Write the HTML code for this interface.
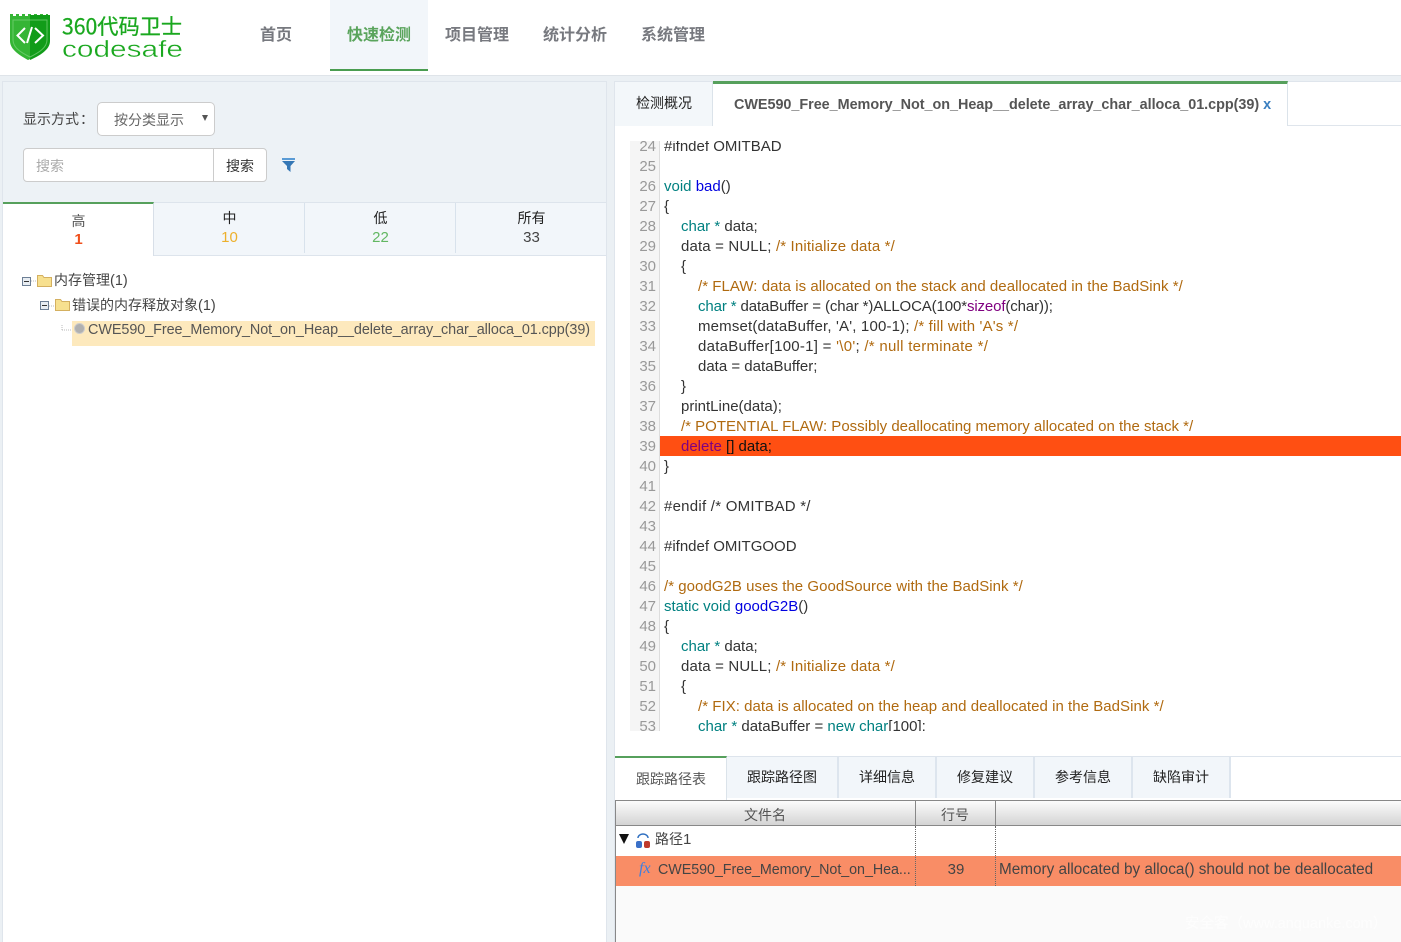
<!DOCTYPE html>
<html lang="zh-CN"><head><meta charset="utf-8"><title>codesafe</title>
<style>
*{box-sizing:border-box}
html,body{margin:0;padding:0}
body{width:1401px;height:942px;overflow:hidden;position:relative;background:#fff;font-family:"Liberation Sans","Noto Sans CJK SC",sans-serif;font-size:14px;color:#444}
.a{position:absolute;white-space:nowrap}
.cn{font-family:"Noto Sans CJK SC","Liberation Sans",sans-serif}
.nav{top:23px;font-size:16px;line-height:20px;font-weight:700;color:#77797f;font-family:"Noto Sans CJK SC",sans-serif}
#code{position:absolute;left:630px;top:141px;width:771px;height:590px;overflow:hidden}
#gut{position:absolute;left:0;top:0;width:30px;height:590px;background:#f5f5f5;border-right:1px solid #ddd}
.l{position:absolute;left:0;width:771px;height:20px;line-height:20px;white-space:pre;font-size:15px;color:#333}
.l b{position:absolute;left:0;top:1px;width:26px;text-align:right;font-weight:400;color:#999;font-size:15px}
.l i{font-style:normal;position:absolute;top:1px}
.t{color:#008080}.f{color:#0000e0}.c{color:#b06a10}.k{color:#800080}
.tab{position:absolute;background:#f2f6fa;border-right:2px solid #dde5ee;text-align:center;font-family:"Noto Sans CJK SC",sans-serif;font-size:14px;color:#222}
</style></head><body>

<!-- header -->
<div class="a" style="left:0;top:75px;width:1401px;height:867px;background:#ebf0f4;border-top:1px solid #dfe4e9"></div>
<svg class="a" style="left:8px;top:12px" width="44" height="49" viewBox="0 0 44 49">
<path d="M2 2h3v2h3V2h3v2h3V2h3v2h3V2h3v2h3V2h3v2h3V2h3v2h3V2h2v27c0 9-11 15-20 19C13 44 2 38 2 29z" fill="#35b535"/>
<path d="M22 3h20v26c0 9-11 15-20 19z" fill="#119c19"/>
<path d="M5 8h34v20c0 8-9 13-17 17C14 41 5 36 5 28z" fill="none" stroke="#7ed47e" stroke-width="1" opacity=".7"/>
<path d="M17 16l-7.500 7.500L17 31M27 16l8 7.500-8 7.500M24 15l-5 16" fill="none" stroke="#fff" stroke-width="2"/>
</svg>
<svg class="a" style="left:60px;top:12px" width="126" height="50">
<text x="2" y="22" font-size="21" fill="#1aa81f" stroke="#1aa81f" stroke-width=".3" textLength="120" lengthAdjust="spacingAndGlyphs" font-family="Noto Sans CJK SC,sans-serif">360代码卫士</text>
<text x="2" y="45" font-size="23" fill="#1aa81f" stroke="#fff" stroke-width=".35" textLength="121" lengthAdjust="spacingAndGlyphs" font-family="Liberation Sans,sans-serif">codesafe</text>
</svg>
<div class="a nav" style="left:260px">首页</div>
<div class="a" style="left:330px;top:0;width:98px;height:71px;background:#f2f6fa;border-bottom:2px solid #4a9d50"></div>
<div class="a nav" style="left:347px;color:#5aa45c">快速检测</div>
<div class="a nav" style="left:445px">项目管理</div>
<div class="a nav" style="left:543px">统计分析</div>
<div class="a nav" style="left:641px">系统管理</div>

<!-- left panel -->
<div class="a" style="left:2px;top:81px;width:605px;height:861px;background:#fff;border:1px solid #dfe5ec;border-bottom:0"></div>
<div class="a" style="left:3px;top:82px;width:603px;height:120px;background:#edf2f6"></div>
<div class="a cn" style="left:23px;top:109px;font-size:14px;line-height:20px;color:#444;letter-spacing:0">显示方式<span style="margin-left:1px">：</span></div>
<div class="a" style="left:97px;top:102px;width:118px;height:34px;background:#fff;border:1px solid #ccc;border-radius:5px"></div>
<div class="a cn" style="left:114px;top:110px;font-size:14px;line-height:20px;color:#666">按分类显示</div>
<div class="a" style="left:202px;top:115px;width:0;height:0;border:3.5px solid transparent;border-top:6px solid #555;border-bottom:0"></div>
<div class="a" style="left:23px;top:148px;width:244px;height:34px;background:#fff;border:1px solid #ccc;border-radius:4px"></div>
<div class="a" style="left:213px;top:149px;width:1px;height:32px;background:#ccc"></div>
<div class="a cn" style="left:36px;top:156px;font-size:14px;line-height:20px;color:#aaa">搜索</div>
<div class="a cn" style="left:226px;top:156px;font-size:14px;line-height:20px;color:#333">搜索</div>
<svg class="a" style="left:282px;top:158px" width="14" height="14"><path d="M0 0h13v2H0z" fill="#5a9bd5"/><path d="M0 3h13L8.500 8v6L5 11V8z" fill="#3577b5"/></svg>

<div class="a" style="left:3px;top:202px;width:603px;height:54px;background:#f2f6fa;border-top:1px solid #dde4ec;border-bottom:1px solid #dde4ec"></div>
<div class="a" style="left:3px;top:202px;width:151px;height:54px;background:#fff;border-top:2px solid #56a05c;border-right:1px solid #d8dfe8"></div>
<div class="a" style="left:304px;top:203px;width:1px;height:50px;background:#d8e2ec"></div>
<div class="a" style="left:455px;top:203px;width:1px;height:50px;background:#d8e2ec"></div>
<div class="a cn" style="left:3px;top:212px;width:151px;text-align:center;font-size:14px;line-height:18px;color:#555">高</div>
<div class="a" style="left:3px;top:231px;width:151px;text-align:center;font-size:15px;line-height:18px;font-weight:700;color:#f0501c">1</div>
<div class="a cn" style="left:154px;top:209px;width:151px;text-align:center;font-size:14px;line-height:18px;color:#222">中</div>
<div class="a" style="left:154px;top:229px;width:151px;text-align:center;font-size:15px;line-height:18px;color:#edb02c">10</div>
<div class="a cn" style="left:305px;top:209px;width:151px;text-align:center;font-size:14px;line-height:18px;color:#222">低</div>
<div class="a" style="left:305px;top:229px;width:151px;text-align:center;font-size:15px;line-height:18px;color:#62b762">22</div>
<div class="a cn" style="left:456px;top:209px;width:151px;text-align:center;font-size:14px;line-height:18px;color:#222">所有</div>
<div class="a" style="left:456px;top:229px;width:151px;text-align:center;font-size:15px;line-height:18px;color:#444">33</div>

<!-- tree -->
<svg class="a" style="left:20px;top:270px" width="70" height="70">
<path d="M11 11h6M29 36h6M42 60v-6M42 60h10" stroke="#bbb" stroke-dasharray="1 1" fill="none"/>
<g fill="#e8edf2" stroke="#6d7f95"><rect x="2.500" y="7.500" width="8" height="8"/><rect x="20.500" y="31.500" width="8" height="8"/></g>
<path d="M4 11.500h5M22 35.500h5" stroke="#333"/>
<g fill="#f7e08f" stroke="#d4b060"><path d="M17.500 5.500h5l1.500 2h7.500v9h-14z"/><path d="M35.500 29.500h5l1.500 2h7.500v9h-14z"/></g>
</svg>
<div class="a" style="left:72px;top:321px;width:523px;height:25px;background:#fde9bd"></div>
<div class="a" style="left:74px;top:323px;width:11px;height:11px;border-radius:50%;background:#b0b0b0;border:1px solid #ccc"></div>
<div class="a" style="left:54px;top:270px;font-size:14.500px;line-height:20px;color:#444"><span class="cn" style="font-size:14px">内存管理</span>(1)</div>
<div class="a" style="left:72px;top:295px;font-size:14.500px;line-height:20px;color:#444"><span class="cn" style="font-size:14px">错误的内存释放对象</span>(1)</div>
<div class="a" id="fn" style="left:88px;top:320px;font-size:14.4px;line-height:20px;letter-spacing:-.065px;color:#555">CWE590_Free_Memory_Not_on_Heap__delete_array_char_alloca_01.cpp(39)</div>

<!-- right panel -->
<div class="a" style="left:614px;top:81px;width:787px;height:861px;background:#fff;border-left:1px solid #dfe5ec;border-top:1px solid #dfe5ec"></div>
<div class="a" style="left:615px;top:125px;width:786px;height:1px;background:#dfe5ec"></div>
<div class="a" style="left:615px;top:82px;width:98px;height:44px;background:#f3f7fa;border-right:1px solid #dbe3ea"></div>
<div class="a cn" style="left:636px;top:94px;font-size:14px;line-height:18px;color:#222">检测概况</div>
<div class="a" style="left:713px;top:81px;width:575px;height:45px;background:#fff;border-top:3px solid #56a05c;border-right:1px solid #dbe3ea"></div>
<div class="a" style="left:734px;top:95px;font-size:14.4px;line-height:20px;font-weight:700;letter-spacing:-.03px;color:#555">CWE590_Free_Memory_Not_on_Heap__delete_array_char_alloca_01.cpp(39) <span style="color:#3a7fc0">x</span></div>

<div id="code">
<div id="gut"></div>
<div class="l" style="top:-5px"><b>24</b><i style="left:34px">#ifndef OMITBAD</i></div>
<div class="l" style="top:15px"><b>25</b></div>
<div class="l" style="top:35px"><b>26</b><i style="left:34px"><span class="t">void</span> <span class="f">bad</span>()</i></div>
<div class="l" style="top:55px"><b>27</b><i style="left:34px">{</i></div>
<div class="l" style="top:75px"><b>28</b><i style="left:51px"><span class="t">char *</span> data;</i></div>
<div class="l" style="top:95px"><b>29</b><i style="left:51px;letter-spacing:.15px">data = NULL; <span class="c">/* Initialize data */</span></i></div>
<div class="l" style="top:115px"><b>30</b><i style="left:51px">{</i></div>
<div class="l" style="top:135px"><b>31</b><i style="left:68px;letter-spacing:.04px" class="c">/* FLAW: data is allocated on the stack and deallocated in the BadSink */</i></div>
<div class="l" style="top:155px"><b>32</b><i style="left:68px;letter-spacing:-.12px"><span class="t">char *</span> dataBuffer = (char *)ALLOCA(100*<span class="k">sizeof</span>(char));</i></div>
<div class="l" style="top:175px"><b>33</b><i style="left:68px;letter-spacing:.17px">memset(dataBuffer, 'A', 100-1); <span class="c">/* fill with 'A's */</span></i></div>
<div class="l" style="top:195px"><b>34</b><i style="left:68px;letter-spacing:.27px">dataBuffer[100-1] = <span class="c">'\0'</span>; <span class="c">/* null terminate */</span></i></div>
<div class="l" style="top:215px"><b>35</b><i style="left:68px">data = dataBuffer;</i></div>
<div class="l" style="top:235px"><b>36</b><i style="left:51px">}</i></div>
<div class="l" style="top:255px"><b>37</b><i style="left:51px">printLine(data);</i></div>
<div class="l" style="top:275px"><b>38</b><i style="left:51px" class="c">/* POTENTIAL FLAW: Possibly deallocating memory allocated on the stack */</i></div>
<div class="l" style="top:295px"><b>39</b><span style="position:absolute;left:30px;top:0;width:741px;height:20px;background:#ff4f12"></span><i style="left:51px;color:#111"><span class="k">delete</span> [] data;</i></div>
<div class="l" style="top:315px"><b>40</b><i style="left:34px">}</i></div>
<div class="l" style="top:335px"><b>41</b></div>
<div class="l" style="top:355px"><b>42</b><i style="left:34px;letter-spacing:.25px">#endif /* OMITBAD */</i></div>
<div class="l" style="top:375px"><b>43</b></div>
<div class="l" style="top:395px"><b>44</b><i style="left:34px">#ifndef OMITGOOD</i></div>
<div class="l" style="top:415px"><b>45</b></div>
<div class="l" style="top:435px"><b>46</b><i style="left:34px;letter-spacing:.04px" class="c">/* goodG2B uses the GoodSource with the BadSink */</i></div>
<div class="l" style="top:455px"><b>47</b><i style="left:34px"><span class="t">static void</span> <span class="f">goodG2B</span>()</i></div>
<div class="l" style="top:475px"><b>48</b><i style="left:34px">{</i></div>
<div class="l" style="top:495px"><b>49</b><i style="left:51px"><span class="t">char *</span> data;</i></div>
<div class="l" style="top:515px"><b>50</b><i style="left:51px;letter-spacing:.15px">data = NULL; <span class="c">/* Initialize data */</span></i></div>
<div class="l" style="top:535px"><b>51</b><i style="left:51px">{</i></div>
<div class="l" style="top:555px"><b>52</b><i style="left:68px;letter-spacing:.04px" class="c">/* FIX: data is allocated on the heap and deallocated in the BadSink */</i></div>
<div class="l" style="top:575px"><b>53</b><i style="left:68px"><span class="t">char *</span> dataBuffer = <span class="t">new char</span>[100];</i></div>
</div>

<!-- bottom tabs -->
<div class="a" style="left:615px;top:756px;width:786px;height:1px;background:#dde4ec"></div>
<div class="a" style="left:615px;top:756px;width:112px;height:44px;background:#fff;border-top:2px solid #56a05c;border-right:1px solid #dbe3ea"></div>
<div class="a cn" style="left:636px;top:770px;font-size:14px;line-height:18px;color:#555">跟踪路径表</div>
<div class="tab" style="left:727px;top:757px;width:112px;height:41px;line-height:40px">跟踪路径图</div>
<div class="tab" style="left:839px;top:757px;width:98px;height:41px;line-height:40px">详细信息</div>
<div class="tab" style="left:937px;top:757px;width:98px;height:41px;line-height:40px">修复建议</div>
<div class="tab" style="left:1035px;top:757px;width:98px;height:41px;line-height:40px">参考信息</div>
<div class="tab" style="left:1133px;top:757px;width:98px;height:41px;line-height:40px">缺陷审计</div>

<!-- table -->
<div class="a" style="left:615px;top:800px;width:786px;height:142px;background:#fafafa;border-left:1px solid #888"></div>
<div class="a" style="left:616px;top:826px;width:785px;height:30px;background:#fff"></div>
<div class="a" style="left:615px;top:800px;width:786px;height:26px;background:linear-gradient(#fcfcfc,#d4d4d4);border-top:1px solid #888;border-bottom:1px solid #888;border-left:1px solid #888"></div>
<div class="a" style="left:915px;top:801px;width:1px;height:24px;background:#888"></div>
<div class="a" style="left:995px;top:801px;width:1px;height:24px;background:#888"></div>
<div class="a cn" style="left:615px;top:806px;width:300px;text-align:center;font-size:14px;line-height:18px;color:#555">文件名</div>
<div class="a cn" style="left:915px;top:806px;width:80px;text-align:center;font-size:14px;line-height:18px;color:#555">行号</div>
<div class="a" style="left:616px;top:856px;width:785px;height:30px;background:#f98d66"></div>
<div class="a" style="left:915px;top:826px;width:0;height:60px;border-left:1px dotted #666"></div>
<div class="a" style="left:995px;top:826px;width:0;height:60px;border-left:1px dotted #666"></div>
<div class="a" style="left:619px;top:834px;width:0;height:0;border:5.500px solid transparent;border-top:10px solid #111;border-bottom:0"></div>
<svg class="a" style="left:635px;top:833px" width="16" height="16"><path d="M3 5a5 4 0 0 1 10 0" fill="none" stroke="#2f6fc0" stroke-width="1.500"/><rect x="1" y="8" width="6" height="7" rx="2" fill="#3a70c8"/><rect x="9" y="8" width="6" height="7" rx="2" fill="#c03a2c"/></svg>
<div class="a" style="left:655px;top:830px;font-size:15px;line-height:18px;color:#444"><span class="cn" style="font-size:14px">路径</span>1</div>
<div class="a" style="left:639px;top:860px;font-family:'Liberation Serif',serif;font-style:italic;font-size:16px;line-height:18px;color:#3f7fe0">fx</div>
<div class="a" style="left:658px;top:861px;font-size:14.3px;line-height:18px;letter-spacing:-.05px;color:#444;width:256px;overflow:hidden">CWE590_Free_Memory_Not_on_Hea...</div>
<div class="a" style="left:916px;top:861px;width:80px;text-align:center;font-size:15px;line-height:18px;color:#444">39</div>
<div class="a" style="left:999px;top:861px;font-size:15.3px;line-height:18px;color:#444">Memory allocated by alloca() should not be deallocated</div>
<div class="a" style="left:1185px;top:914px;font-size:14.500px;line-height:18px;color:#fff;opacity:.75"><span class="cn">安全客（</span>www.anquanke.com<span class="cn">）</span></div>
</body></html>
